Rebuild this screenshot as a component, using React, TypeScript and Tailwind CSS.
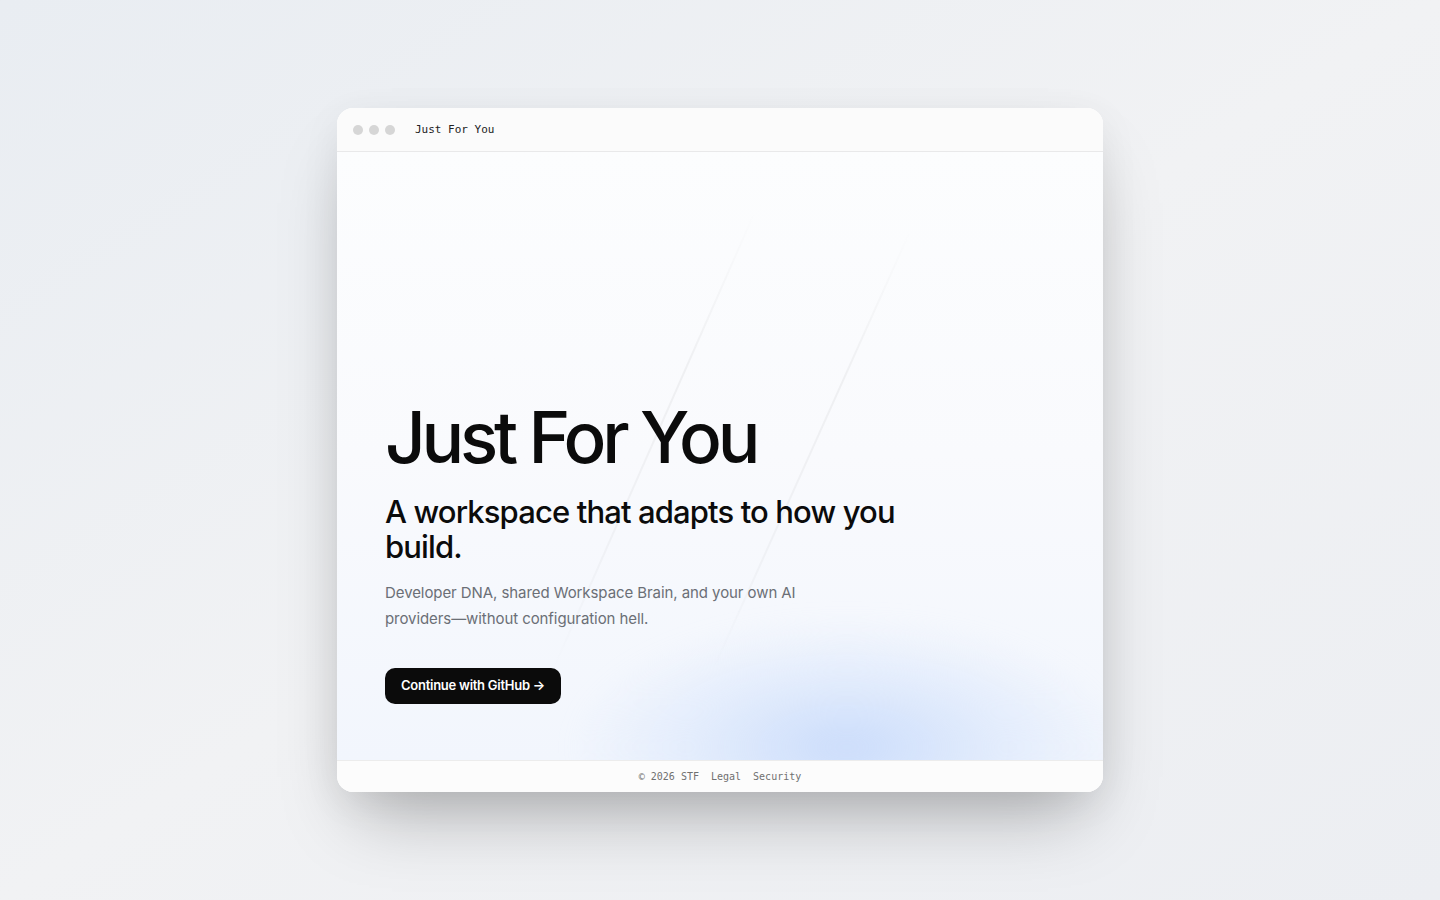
const sans = { fontFamily: 'Inter, "Noto Sans", sans-serif' }
const mono = { fontFamily: '"DejaVu Sans Mono", "Liberation Mono", monospace' }

function TitleBar() {
  return (
    <div className="flex h-[44px] items-center gap-[20px] border-b border-[#e9e9ea] bg-[#fbfbfb] px-4">
      <div className="flex items-center gap-[6px]">
        <span className="h-[10px] w-[10px] rounded-full bg-[#d6d6d6]" />
        <span className="h-[10px] w-[10px] rounded-full bg-[#d6d6d6]" />
        <span className="h-[10px] w-[10px] rounded-full bg-[#d6d6d6]" />
      </div>
      <span className="pt-px text-[11px] text-[#222]" style={mono}>
        Just For You
      </span>
    </div>
  )
}

function Backdrop() {
  return (
    <>
      {/* soft blue glow */}
      <div className="pointer-events-none absolute left-[240px] top-[470px] h-[250px] w-[540px] rounded-full bg-[radial-gradient(ellipse_at_center,rgba(196,216,250,0.85)_0%,rgba(214,228,252,0.55)_40%,rgba(240,245,253,0)_72%)] blur-[12px]" />
      {/* diagonal streaks */}
      <svg className="pointer-events-none absolute inset-0 h-full w-full" viewBox="0 0 766 608" preserveAspectRatio="none">
        <defs>
          <linearGradient id="streak" x1="0" y1="0" x2="0" y2="1">
            <stop offset="0" stopColor="#000" stopOpacity="0" />
            <stop offset="0.35" stopColor="#000" stopOpacity="0.045" />
            <stop offset="0.75" stopColor="#000" stopOpacity="0.03" />
            <stop offset="1" stopColor="#000" stopOpacity="0" />
          </linearGradient>
        </defs>
        <line x1="420" y1="55" x2="215" y2="520" stroke="url(#streak)" strokeWidth="2" />
        <line x1="575" y1="75" x2="375" y2="520" stroke="url(#streak)" strokeWidth="2" />
      </svg>
    </>
  )
}

function Hero() {
  return (
    <div className="relative flex h-[608px] flex-col justify-end overflow-hidden bg-gradient-to-b from-[#fcfdfe] via-[#f9fafd] to-[#f2f6fd] px-12 pb-[56px]">
      <Backdrop />
      <div className="relative">
        <h1 className="text-[71px] font-medium leading-[1] tracking-[-0.06em] text-[#0b0b0b]">
          Just For You
        </h1>
        <h2 className="mt-[21px] max-w-[530px] text-[31px] font-medium leading-[35px] tracking-[-0.028em] text-[#0b0b0b]">
          A workspace that adapts to how you build.
        </h2>
        <p className="mt-[16px] max-w-[440px] text-[15px] leading-[26px] tracking-[-0.005em] text-[#6b6f76]">
          Developer DNA, shared Workspace Brain, and your own AI providers—without configuration hell.
        </p>
        <button className="mt-[36px] flex h-[36px] items-center rounded-[10px] bg-[#0b0b0b] px-4 text-[13px] font-semibold tracking-[-0.02em] text-white">
          Continue with GitHub →
        </button>
      </div>
    </div>
  )
}

function Footer() {
  return (
    <div className="flex h-[32px] items-center justify-center gap-3 border-t border-[#ececec] bg-[#fcfcfc] text-[10px] text-[#707070]" style={mono}>
      <span>© 2026 STF</span>
      <span>Legal</span>
      <span>Security</span>
    </div>
  )
}

export default function App() {
  return (
    <div
      className="flex min-h-screen items-center justify-center bg-gradient-to-br from-[#e9edf2] via-[#f1f2f4] to-[#eceef2]"
      style={sans}
    >
      <div className="w-[766px] overflow-hidden rounded-2xl bg-white shadow-[0_40px_70px_-20px_rgba(0,0,0,0.28),0_10px_40px_rgba(0,0,0,0.06)]">
        <TitleBar />
        <Hero />
        <Footer />
      </div>
    </div>
  )
}
